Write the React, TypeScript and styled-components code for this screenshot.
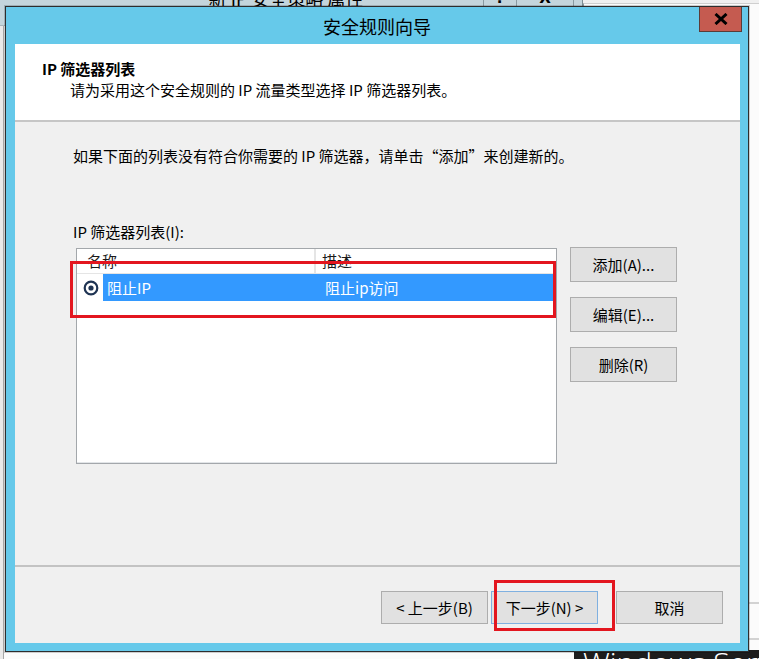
import React from "react";
import styled, { createGlobalStyle } from "styled-components";

const FONT = `"Noto Sans CJK SC", "Noto Sans", sans-serif`;

const GlobalStyle = createGlobalStyle`
  html, body { margin: 0; padding: 0; overflow: hidden; background: #f0f0f0; }
  body { font-family: ${FONT}; }
  * { box-sizing: border-box; }
`;

const Desktop = styled.div`
  position: relative;
  width: 759px;
  height: 659px;
  overflow: hidden;
  background: #f0f0f0;
  font-family: ${FONT};
  color: #000;
`;

/* ---------- window behind the dialog ---------- */
const BackWindow = styled.div`
  position: absolute;
  left: -10px;
  top: -14px;
  width: 593px;
  height: 700px;
  background: #c4d5dc;
  border-right: 1px solid #7d8d94;
  display: flex;
  flex-direction: column;
`;

const BackTitleBar = styled.div`
  height: 39px;
  display: grid;
  grid-template-columns: 1fr auto 1fr;
  align-items: start;
`;

const BackTitle = styled.div`
  grid-column: 2;
  padding-top: 2px;
  font-size: 18px;
  line-height: 20px;
  white-space: nowrap;
`;

const BackCaption = styled.div`
  grid-column: 3;
  justify-self: end;
  display: flex;
  margin-right: 8px;
`;

const BackCaptionButton = styled.div<{ $w: number }>`
  width: ${(p) => p.$w}px;
  height: 21px;
  border: 1px solid #8a9aa1;
  border-top: none;
  margin-left: -1px;
  display: flex;
  align-items: center;
  justify-content: center;
  font-family: "DejaVu Sans", sans-serif;
  font-weight: 700;
  font-size: 15px;
  padding-top: 3px;
`;

const BackClient = styled.div`
  flex: 1;
  background: #e9e9e9;
  border-top: 1px solid #a9b5ba;
  padding-left: 13px;
  display: flex;
`;

const BackClientPanel = styled.div`
  flex: 1;
  background: #fbfbfb;
  border-left: 1px solid #a6a6a6;
`;

const OtherWindow = styled.div`
  position: absolute;
  left: 583px;
  top: 3px;
  width: 200px;
  height: 650px;
  background: #fbfbfb;
  border-top: 1px solid #cfcfcf;
  border-left: 1px solid #8d9ba1;
  display: flex;
  flex-direction: column;
`;

const OtherLine = styled.div<{ $top: number }>`
  margin-top: ${(p) => p.$top}px;
  height: 2px;
  background: #d2d2d2;
`;

const DarkPanel = styled.div`
  position: absolute;
  left: 574px;
  top: 650px;
  width: 200px;
  height: 20px;
  background: #1d1d1d;
  overflow: hidden;
`;

const DarkText = styled.div`
  margin-top: -2px;
  padding-left: 9px;
  font-family: "Open Sans", "Liberation Sans", sans-serif;
  font-weight: 300;
  font-size: 30px;
  line-height: 30px;
  color: #fff;
  white-space: nowrap;
`;

/* ---------- dialog ---------- */
const Dialog = styled.div`
  position: absolute;
  left: 5px;
  top: 6px;
  width: 744px;
  height: 646px;
  background: #66c9ea;
  border: 1px solid #2d2d2d;
  box-shadow: 0 0 0 1px rgba(0, 0, 0, 0.18);
  display: flex;
  flex-direction: column;
`;

const TitleBar = styled.div`
  height: 37px;
  display: grid;
  grid-template-columns: 1fr auto 1fr;
  align-items: center;
`;

const Title = styled.div`
  grid-column: 2;
  font-size: 18px;
  line-height: 24px;
  padding-top: 1px;
  color: #000;
`;

const CloseButton = styled.div`
  grid-column: 3;
  justify-self: end;
  align-self: start;
  margin-right: 6px;
  width: 43px;
  height: 25px;
  background: #c55b50;
  border: 1px solid #5b3c37;
  border-top: none;
  display: flex;
  align-items: center;
  justify-content: center;
  padding-left: 1px;
`;

const Frame = styled.div`
  flex: 1;
  display: flex;
  padding: 0 8px 8px 9px;
`;

const Content = styled.div`
  flex: 1;
  background: #f0f0f0;
  display: flex;
  flex-direction: column;
`;

const Header = styled.div`
  height: 78px;
  background: #fff;
  border-bottom: 2px solid #c6c6c6;
  padding: 14px 0 0 27px;
`;

const HeaderTitle = styled.div`
  font-size: 15px;
  line-height: 21px;
  font-weight: 700;
`;

const HeaderSub = styled.div`
  font-size: 15px;
  line-height: 21px;
  padding-left: 28px;
`;

const Body = styled.div`
  flex: 1;
  display: flex;
  flex-direction: column;
  padding-top: 24px;
`;

const TextLine = styled.div<{ $gap?: number }>`
  margin-left: 58px;
  margin-top: ${(p) => p.$gap ?? 0}px;
  font-size: 15px;
  line-height: 20px;
  white-space: nowrap;
`;

const ListRow = styled.div`
  margin-top: 6px;
  padding-left: 61px;
  display: flex;
  align-items: flex-start;
`;

const ListBox = styled.div`
  position: relative;
  width: 481px;
  height: 216px;
  background: #fff;
  border: 1px solid #a3a7ab;
  box-shadow: inset 0 -1px 0 #e2e5e8;
`;

const ListHeader = styled.div`
  display: grid;
  grid-template-columns: 239px 1fr;
  height: 25px;
  border-bottom: 1px solid #e5e5e5;
`;

const HeaderCell = styled.div<{ $divider?: boolean }>`
  font-size: 15px;
  line-height: 24px;
  padding-left: ${(p) => (p.$divider ? 10 : 6)}px;
  border-right: ${(p) => (p.$divider ? "2px solid #e5e5e5" : "none")};
  color: #1a1a1a;
`;

const ListItem = styled.div`
  display: grid;
  grid-template-columns: 26px 213px 1fr;
  height: 27px;
`;

const RadioCell = styled.div`
  display: flex;
  align-items: center;
  justify-content: center;
  padding-left: 1px;
`;

const SelectedCell = styled.div<{ $pad: number }>`
  background: #3399ff;
  color: #fff;
  font-size: 15px;
  line-height: 27px;
  padding-left: ${(p) => p.$pad}px;
  white-space: nowrap;
`;

const ButtonColumn = styled.div`
  margin-left: 13px;
  margin-top: -1px;
  display: flex;
  flex-direction: column;
  gap: 15px;
`;

const Button = styled.button<{ $h?: number; $default?: boolean }>`
  width: 107px;
  height: ${(p) => p.$h ?? 35}px;
  background: #e1e1e1;
  border: 1px solid ${(p) => (p.$default ? "#7fb0e0" : "#adadad")};
  font-family: ${FONT};
  font-size: 15px;
  color: #000;
  padding: 0;
  white-space: nowrap;
`;

const Spacer = styled.div`
  flex: 1;
`;

const Separator = styled.div`
  height: 2px;
  background: #c3c3c3;
`;

const Footer = styled.div`
  display: flex;
  justify-content: flex-end;
  padding: 24px 17px 19px 0;
`;

const NextSlot = styled.div`
  position: relative;
  margin-left: 3px;
  margin-right: 18px;
`;

const ListAnnotation = styled.div`
  position: absolute;
  left: -7px;
  top: 12px;
  width: 486px;
  height: 57px;
  border: 3px solid #e3161f;
  pointer-events: none;
`;

const NextAnnotation = styled.div`
  position: absolute;
  left: 3px;
  top: -11px;
  width: 121px;
  height: 51px;
  border: 3px solid #e3161f;
  pointer-events: none;
`;

const RadioIcon = () => (
  <svg width="16" height="16" viewBox="0 0 16 16">
    <circle cx="8" cy="8" r="6.3" fill="#fff" stroke="#1f3453" strokeWidth="2.2" />
    <circle cx="8" cy="8" r="2.6" fill="#1f3453" />
  </svg>
);

const CloseGlyph = () => (
  <svg width="14" height="12" viewBox="0 0 14 12">
    <path d="M1.5 1 L12.5 11 M12.5 1 L1.5 11" stroke="#000" strokeWidth="3" fill="none" />
  </svg>
);

export default function App() {
  return (
    <Desktop>
      <GlobalStyle />
      <BackWindow>
        <BackTitleBar>
          <BackTitle>新 IP 安全策略 属性</BackTitle>
          <BackCaption>
            <BackCaptionButton $w={34}>?</BackCaptionButton>
            <BackCaptionButton $w={58}>X</BackCaptionButton>
          </BackCaption>
        </BackTitleBar>
        <BackClient>
          <BackClientPanel />
        </BackClient>
      </BackWindow>
      <OtherWindow>
        <OtherLine $top={598} />
        <OtherLine $top={34} />
      </OtherWindow>
      <DarkPanel>
        <DarkText>Windows Server</DarkText>
      </DarkPanel>

      <Dialog>
        <TitleBar>
          <Title>安全规则向导</Title>
          <CloseButton>
            <CloseGlyph />
          </CloseButton>
        </TitleBar>
        <Frame>
          <Content>
            <Header>
              <HeaderTitle>IP 筛选器列表</HeaderTitle>
              <HeaderSub>请为采用这个安全规则的 IP 流量类型选择 IP 筛选器列表。</HeaderSub>
            </Header>
            <Body>
              <TextLine>如果下面的列表没有符合你需要的 IP 筛选器，请单击“添加”来创建新的。</TextLine>
              <TextLine $gap={56}>IP 筛选器列表(I):</TextLine>
              <ListRow>
                <ListBox>
                  <ListHeader>
                    <HeaderCell $divider>名称</HeaderCell>
                    <HeaderCell>描述</HeaderCell>
                  </ListHeader>
                  <ListItem>
                    <RadioCell>
                      <RadioIcon />
                    </RadioCell>
                    <SelectedCell $pad={4}>阻止IP</SelectedCell>
                    <SelectedCell $pad={9}>阻止ip访问</SelectedCell>
                  </ListItem>
                  <ListAnnotation />
                </ListBox>
                <ButtonColumn>
                  <Button>添加(A)...</Button>
                  <Button>编辑(E)...</Button>
                  <Button>删除(R)</Button>
                </ButtonColumn>
              </ListRow>
              <Spacer />
              <Separator />
              <Footer>
                <Button $h={33}>&lt; 上一步(B)</Button>
                <NextSlot>
                  <Button $h={33} $default>
                    下一步(N) &gt;
                  </Button>
                  <NextAnnotation />
                </NextSlot>
                <Button $h={33}>取消</Button>
              </Footer>
            </Body>
          </Content>
        </Frame>
      </Dialog>
    </Desktop>
  );
}
